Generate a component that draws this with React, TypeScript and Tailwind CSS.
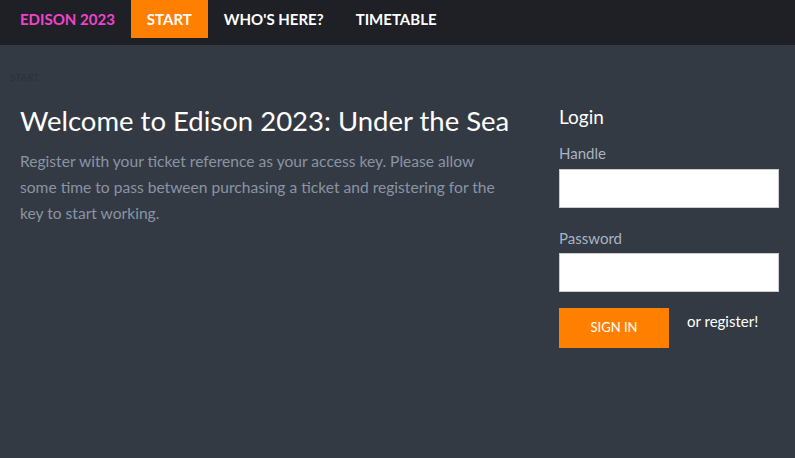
export default function App() {
  return (
    <div className="min-h-[458px] bg-[#343a43] font-['Lato',sans-serif]">
      <nav className="h-[45px] bg-[#1e2026] flex items-start px-5">
        <a className="h-[38px] flex items-center text-[15px] font-bold text-[#ee44cc] pr-4">EDISON 2023</a>
        <a className="h-[38px] flex items-center px-4 text-[15px] font-bold text-white bg-[#ff8000]">START</a>
        <a className="h-[38px] flex items-center px-4 text-[15px] font-bold text-white">WHO'S HERE?</a>
        <a className="h-[38px] flex items-center px-4 text-[15px] font-bold text-white">TIMETABLE</a>
      </nav>
      <div className="px-[10px] pt-[26px] text-[10px] leading-[12px] text-[#2c3037]">START</div>
      <div className="flex px-5 pt-[22px]">
        <div className="flex-1 pr-10">
          <h1 className="text-[27.5px] leading-[32px] text-white">Welcome to Edison 2023: Under the Sea</h1>
          <p className="mt-[11px] text-[15.6px] leading-[26px] text-[#8a94a5] max-w-[492px]">
            Register with your ticket reference as your access key. Please allow some time to pass between purchasing a ticket and registering for the key to start working.
          </p>
        </div>
        <div className="w-[220px] mr-[-4px]">
          <h2 className="text-[19px] leading-[24px] text-white">Login</h2>
          <label className="block mt-[14px] text-[15px] leading-[20px] text-[#aab3c2]">Handle</label>
          <input className="block mt-[6px] w-full h-[39px] bg-white border border-[#ccc]" />
          <label className="block mt-[20px] text-[15px] leading-[20px] text-[#aab3c2]">Password</label>
          <input type="password" className="block mt-[5px] w-full h-[39px] bg-white border border-[#ccc]" />
          <div className="flex items-start mt-[16px]">
            <button className="w-[110px] h-[40px] bg-[#ff8000] text-white text-[13px]">SIGN IN</button>
            <span className="ml-[18px] mt-[2px] text-[15px] text-white">or register!</span>
          </div>
        </div>
      </div>
    </div>
  );
}
